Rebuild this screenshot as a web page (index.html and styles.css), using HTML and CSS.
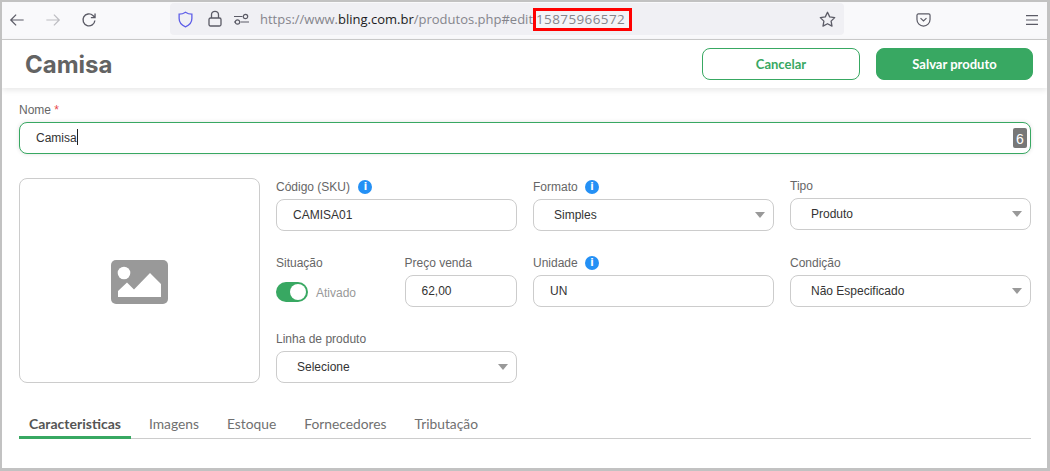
FILE: index.html
```html
<!DOCTYPE html>
<html lang="pt-BR">
<head>
<meta charset="utf-8">
<title>Camisa</title>
<link rel="stylesheet" href="styles.css">
</head>
<body>
<div class="window">
  <div class="chrome">
    <div class="nav">
      <svg class="ico" width="16" height="16" viewBox="0 0 18 18"><path d="M16.5 9H2M8 3L2 9l6 6" fill="none" stroke="#5b5b66" stroke-width="1.4"/></svg>
      <svg class="ico" width="16" height="16" viewBox="0 0 18 18"><path d="M1.5 9H16M10 3l6 6-6 6" fill="none" stroke="#bdbdc2" stroke-width="1.4"/></svg>
      <svg class="ico" width="16" height="16" viewBox="0 0 18 18"><path d="M15.6 9.5A6.7 6.7 0 1 1 13.4 3.9L15.5 6M15.8 1.6V6.3H11.1" fill="none" stroke="#5b5b66" stroke-width="1.5"/></svg>
    </div>
    <div class="urlbar">
      <svg class="shield" width="15" height="17" viewBox="0 0 16 18"><path d="M8 1.200C10 2.600 12.400 3.300 14.800 3.300V8C14.800 12 12 15.200 8 16.800C4 15.200 1.200 12 1.200 8V3.300C3.600 3.300 6 2.600 8 1.200Z" fill="none" stroke="#5f5fe8" stroke-width="1.400"/></svg>
      <svg class="lock" width="14" height="18" viewBox="0 0 14 18"><path d="M3.500 8V4.800a3.500 3.500 0 0 1 7 0V8M2.500 8h9a1.500 1.500 0 0 1 1.500 1.500v5a1.500 1.500 0 0 1-1.500 1.500h-9A1.500 1.500 0 0 1 1 14.500v-5A1.500 1.500 0 0 1 2.500 8Z" fill="none" stroke="#5b5b66" stroke-width="1.300"/></svg>
      <svg class="perm" width="16" height="12" viewBox="0 0 16 12"><path d="M0 3.500H8.500M0 9H1M6.500 9H15" stroke="#5b5b66" stroke-width="1.200" fill="none"/><circle cx="11.500" cy="3.500" r="2.200" fill="none" stroke="#5b5b66" stroke-width="1.200"/><circle cx="3.500" cy="9" r="2.200" fill="none" stroke="#5b5b66" stroke-width="1.200"/></svg>
      <span class="url">https://www.<b>bling.com.br</b>/produtos.php#edit</span>
      <span class="urlid">15875966572</span>
      <svg class="star" width="17" height="17" viewBox="0 0 17 17"><path d="M8.500 1.300l2.200 4.600 5 .7-3.600 3.500.9 5-4.500-2.400L4 15.100l.9-5L1.300 6.600l5-.7Z" fill="none" stroke="#5b5b66" stroke-width="1.300" stroke-linejoin="round"/></svg>
    </div>
    <svg class="pocket" width="15" height="14" viewBox="0 0 16 15"><path d="M2.500 1h11A1.500 1.500 0 0 1 15 2.500V7a7 7 0 0 1-14 0V2.500A1.500 1.500 0 0 1 2.500 1ZM4.800 5.500 8 8.500l3.200-3" fill="none" stroke="#5b5b66" stroke-width="1.300"/></svg>
    <svg class="menu" width="12" height="10" viewBox="0 0 12 10"><path d="M0 .7H12M0 5H12M0 9.300H12" stroke="#5b5b66" stroke-width="1.200"/></svg>
  </div>
  <header class="head">
    <h1 class="title">Camisa</h1>
    <div class="actions">
      <button class="btn btn-outline">Cancelar</button>
      <button class="btn btn-solid">Salvar produto</button>
    </div>
  </header>
  <main class="form">
    <div class="name-field">
      <label class="label label-name">Nome <span class="req">*</span></label>
      <div class="control control-focus">Camisa<span class="cursor"></span><span class="count">6</span></div>
    </div>
    <div class="grid">
      <div class="photo">
        <svg width="57" height="44" viewBox="0 0 57 44"><rect width="57" height="44" rx="5" fill="#999"/><circle cx="13" cy="13" r="6.300" fill="#fff"/><path d="M7 37V31L16 22.500 23 29.500 39 13 50 24V37Z" fill="#fff"/></svg>
      </div>
      <div class="field">
        <label class="label">Código (SKU) <i class="info info-sku">i</i></label>
        <div class="control">CAMISA01</div>
      </div>
      <div class="field">
        <label class="label">Formato <i class="info">i</i></label>
        <div class="control control-select">Simples</div>
      </div>
      <div class="field field-short">
        <label class="label">Tipo</label>
        <div class="control control-select">Produto</div>
      </div>
      <div class="field-pair">
        <div class="field">
          <label class="label">Situação</label>
          <div class="toggle-row"><span class="toggle"></span><span class="toggle-text">Ativado</span></div>
        </div>
        <div class="field">
          <label class="label">Preço venda</label>
          <div class="control">62,00</div>
        </div>
      </div>
      <div class="field">
        <label class="label">Unidade <i class="info">i</i></label>
        <div class="control">UN</div>
      </div>
      <div class="field">
        <label class="label">Condição</label>
        <div class="control control-select">Não Especificado</div>
      </div>
      <div class="field">
        <label class="label">Linha de produto</label>
        <div class="control control-select">Selecione</div>
      </div>
    </div>
    <nav class="tabs">
      <a class="tab tab-active">Caracteristicas</a>
      <a class="tab">Imagens</a>
      <a class="tab">Estoque</a>
      <a class="tab">Fornecedores</a>
      <a class="tab">Tributação</a>
    </nav>
  </main>
</div>
</body>
</html>
```
FILE: styles.css
```css
* { box-sizing: border-box; }
html, body { margin: 0; padding: 0; background: #fff; }
.window {
  width: 1050px; height: 471px; overflow: hidden;
  border: 2px solid #c2c2c2; border-width: 2px 3px 3px 2px;
  font-family: "Liberation Sans", Arial, sans-serif; color: #333;
  background: #fff;
}
.chrome {
  height: 38px; background: #f9f9fb; border-bottom: 1px solid #ccc;
  display: flex; align-items: flex-start; position: relative;
}
.nav { display: flex; gap: 20px; padding: 10px 0 0 7px; width: 168px; }
.urlbar {
  width: 674px; height: 32px; margin-top: 1px; background: #f0f0f4; border-radius: 4px;
  display: flex; align-items: center; padding-left: 8px;
}
.shield { margin-right: 15px; }
.lock { margin-right: 12px; }
.perm { margin-right: 10px; }
.url, .urlid { font: 13px "Open Sans", sans-serif; color: #85858c; white-space: nowrap; }
.url b { font-weight: 400; color: #1c1b22; }
.url { width: 273px; }
.urlid {
  font-size: 13.5px; width: 99px; height: 23px; border: 3px solid #f00; line-height: 17px;
  letter-spacing: .38px; background: #f4f4f7;
}
.star { margin-left: auto; margin-right: 8px; }
.pocket { margin: 11px 0 0 72px; }
.menu { margin: 13px 0 0 95px; }
.head {
  height: 48px; display: flex; align-items: center; justify-content: space-between;
  padding: 0 14px 0 23px; box-shadow: 0 2px 6px rgba(0,0,0,.1); background: #fff;
  position: relative;
}
.title { margin: 0; font: 700 24px Inter, sans-serif; color: #636363; }
.actions { display: flex; gap: 16px; }
.btn {
  width: 158px; height: 32px; border-radius: 8px; font: 700 13px Lato, sans-serif;
  border: 1px solid #38a862; padding: 0;
}
.btn-outline { background: #fff; color: #38a862; }
.btn-solid { background: #38a862; color: #fff; width: 157px; }
.form { padding: 12px 0 0 17px; width: 1029px; }
.label { display: block; font-size: 12px; line-height: 19px; height: 21px; color: #666; white-space: nowrap; }
.label-name { height: 22px; line-height: 20px; }
.req { color: #e8484d; }
.control {
  height: 32px; border: 1px solid #ccc; border-radius: 8px; font-size: 12px; line-height: 31px;
  padding-left: 16px; color: #333; position: relative; background: #fff;
}
.control-focus { border-color: #38a862; box-shadow: 0 0 4px rgba(0,0,0,.12); }
.control-select { padding-left: 20px; }
.control-select::after {
  content: ""; position: absolute; right: 8px; top: 12px;
  border: 5.500px solid transparent; border-top: 6px solid #999; border-bottom: 0;
  width: 0; height: 0;
}
.cursor { display: inline-block; width: 1px; height: 16px; background: #222; vertical-align: -3px; }
.count {
  position: absolute; right: 3px; top: 5px; width: 14px; height: 20px; background: #777;
  border-radius: 2px; color: #fff; font-size: 14px; line-height: 22px; text-align: center;
}
.name-field { height: 54px; }
.grid {
  margin-top: 24px; display: grid; grid-template-columns: repeat(4, 241px); column-gap: 16px;
  grid-auto-rows: 53px; row-gap: 23px;
}
.photo {
  grid-row: 1 / span 3; border: 1px solid #ccc; border-radius: 8px; height: 205px; padding-top: 2px;
  display: flex; align-items: center; justify-content: center;
}
.field-short .label { height: 20px; line-height: 17px; }
.field-pair { display: grid; grid-template-columns: repeat(2, 1fr); column-gap: 16px; }
.info {
  display: inline-block; width: 14px; height: 14px; border-radius: 50%; background: #2490f5;
  color: #fff; font: 700 10px/14px "DejaVu Sans", sans-serif; text-align: center; margin-left: 4px;
  vertical-align: 1px;
}
.info-sku { margin-left: 5px; }
.toggle-row { display: flex; align-items: center; height: 32px; gap: 8px; padding-top: 2px; }
.toggle { width: 32px; height: 20px; background: #38a862; border-radius: 10px; position: relative; }
.toggle::after {
  content: ""; position: absolute; right: 2px; top: 2px; width: 16px; height: 16px;
  background: #fff; border-radius: 50%;
}
.toggle-text { font-size: 12px; color: #999; padding-top: 1px; }
.tabs { margin-top: 31px; display: flex; gap: 8px; border-bottom: 1px solid #ccc; height: 25px; }
.tab { padding: 0 10px; font: 13.8px/20px Lato, sans-serif; color: #707070; height: 25px; }
.tab-active { font-weight: 700; color: #555; border-bottom: 3px solid #38a862; font-size: 14px; }
```
